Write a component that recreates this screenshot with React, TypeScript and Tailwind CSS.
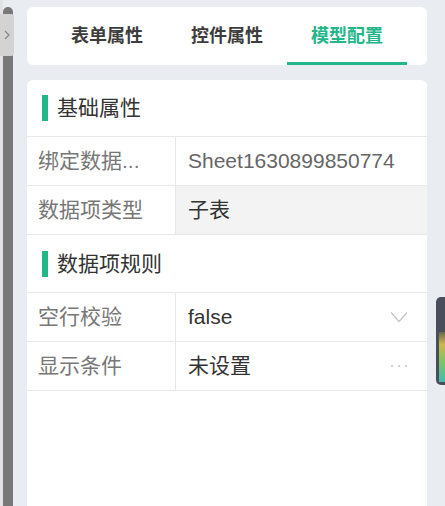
import React from 'react';

interface Row {
  label: string;
  value: string;
  muted?: boolean;
  disabled?: boolean;
  suffix?: 'select' | 'more';
}

const tabs = ['表单属性', '控件属性', '模型配置'];

const basicRows: Row[] = [
  { label: '绑定数据...', value: 'Sheet1630899850774', muted: true },
  { label: '数据项类型', value: '子表', disabled: true },
];

const ruleRows: Row[] = [
  { label: '空行校验', value: 'false', suffix: 'select' },
  { label: '显示条件', value: '未设置', suffix: 'more' },
];

function SectionTitle({ title, className }: { title: string; className: string }) {
  return (
    <div className={`flex items-center pl-[15px] border-b border-[#e8e8e8] ${className}`}>
      <span className="w-[6px] h-[26px] bg-[#22b68a]" />
      <span className="ml-[9px] text-[21px] text-[#333]">{title}</span>
    </div>
  );
}

function PropRow({ row }: { row: Row }) {
  return (
    <div className="flex h-[49px] border-b border-[#e8e8e8]">
      <div className="w-[149px] shrink-0 flex items-center pl-[11px] border-r border-[#e8e8e8] text-[21px] text-[#777] whitespace-nowrap overflow-hidden">
        {row.label}
      </div>
      <div
        className={`flex-1 flex items-center pl-[12px] pr-[19px] text-[21px] ${
          row.disabled ? 'bg-[#f3f3f3]' : ''
        } ${row.muted ? 'text-[#666]' : 'text-[#333]'}`}
      >
        <span className="flex-1">{row.value}</span>
        {row.suffix === 'select' && (
          <svg width="18" height="12" viewBox="0 0 18 12" fill="none" stroke="#c4c4c4" strokeWidth="1.2">
            <path d="M1 1.5l8 9 8-9" />
          </svg>
        )}
        {row.suffix === 'more' && (
          <svg width="18" height="4" viewBox="0 0 18 4" fill="#c4c4c4">
            <circle cx="2" cy="2" r="1" />
            <circle cx="9" cy="2" r="1" />
            <circle cx="16" cy="2" r="1" />
          </svg>
        )}
      </div>
    </div>
  );
}

export default function App() {
  return (
    <div
      className="relative flex w-[445px] h-[506px] overflow-hidden bg-[#e9ecf0]"
      style={{ fontFamily: '"Liberation Sans", "Noto Sans CJK SC", sans-serif' }}
    >
      {/* left rail */}
      <div className="w-[3px] bg-[#e2e2e2]" />
      <div className="w-[10px] mt-[7px] bg-[#787878] rounded-t-full" />

      {/* panel */}
      <div className="ml-[14px] w-[400px] flex flex-col">
        <div className="mt-[7px] h-[58px] bg-white rounded-[6px] flex justify-center px-[20px]">
          {tabs.map((t, i) => (
            <div
              key={t}
              className={`w-[120px] flex items-center justify-center text-[18px] font-bold ${
                i === 2 ? 'text-[#22b68a] border-b-[3px] border-[#22b68a] pt-[3px]' : 'text-[#3d3d3d]'
              }`}
            >
              {t}
            </div>
          ))}
        </div>

        <div className="mt-[15px] flex-1 bg-white rounded-t-[6px]">
          <SectionTitle title="基础属性" className="h-[57px]" />
          {basicRows.map((r) => (
            <PropRow key={r.label} row={r} />
          ))}
          <SectionTitle title="数据项规则" className="h-[58px]" />
          {ruleRows.map((r) => (
            <PropRow key={r.label} row={r} />
          ))}
        </div>
      </div>

      {/* collapse handle */}
      <div className="absolute left-0 top-[14px] w-[14px] h-[42px] bg-[#d3d3d3] rounded-r-[3px] flex items-center justify-center">
        <svg width="6" height="10" viewBox="0 0 6 10" fill="none" stroke="#8a8a8a" strokeWidth="1.3">
          <path d="M1 1l4 4-4 4" />
        </svg>
      </div>

      {/* floating widget at right edge */}
      <div className="absolute left-[436px] top-[297px] w-[14px] h-[88px] rounded-[5px] bg-[#4a4e5b] p-[3px] flex flex-col justify-end">
        <div className="h-[50px] w-full bg-[linear-gradient(to_bottom,#6b6b4a_0%,#d9c44a_25%,#8fd060_55%,#3fc9b8_100%)] opacity-90" />
      </div>
    </div>
  );
}
